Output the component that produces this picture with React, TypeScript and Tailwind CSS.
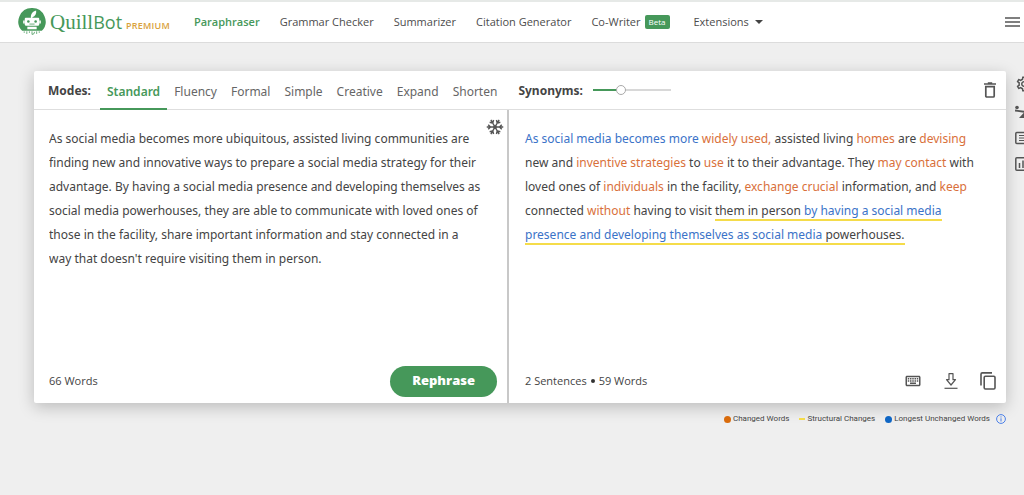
import { useState } from "react";
import type { ReactNode } from "react";
import { MdOutlineSettings, MdOutlineKeyboard } from "react-icons/md";

const SOURCE_TEXT =
  "As social media becomes more ubiquitous, assisted living communities are finding new and innovative ways to prepare a social media strategy for their advantage. By having a social media presence and developing themselves as social media powerhouses, they are able to communicate with loved ones of those in the facility, share important information and stay connected in a way that doesn't require visiting them in person.";

const MODES = ["Standard", "Fluency", "Formal", "Simple", "Creative", "Expand", "Shorten"];

function Logo() {
  return (
    <svg viewBox="0 0 54 54" className="h-7 w-7 shrink-0" aria-hidden="true">
      <path d="M27 0a26 26 0 0 1 19 44H8A26 26 0 0 1 27 0z" fill="#46985a" />
      <path d="M25 20c-1-8 3-13 10-15 1 6-2 11-7 13l-1 3z" fill="#fff" />
      <rect x="13" y="19" width="28" height="15" rx="2" fill="#fff" />
      <path d="M10 24h3v6h-3zM41 24h3v6h-3zM18 36h18v5H18z" fill="#fff" />
      <circle cx="20" cy="26" r="2.500" fill="#46985a" />
      <circle cx="34" cy="26" r="2.500" fill="#46985a" />
      <path d="M22 31h10" stroke="#46985a" strokeWidth="1.500" />
      <path d="M12 45v3m5-3v5m5-5v3m5-3v6q5 0 5-5m4-1v5m5-5v3" stroke="#46985a" strokeWidth="1.500" fill="none" />
    </svg>
  );
}

function TrashIcon() {
  return (
    <svg viewBox="0 0 12 16" className="h-4 w-3" fill="none" stroke="#555" strokeWidth="1.700" aria-hidden="true">
      <path d="M0 2h12M3.800 1h4.400" />
      <path d="M1.800 4.600h8.400v9.400q0 1-1 1H2.800q-1 0-1-1z" />
    </svg>
  );
}

function SnowflakeIcon() {
  const arms = [0, 60, 120, 180, 240, 300];
  return (
    <svg viewBox="-12 -12 24 24" className="h-[18px] w-[18px]" fill="none" stroke="#555" strokeWidth="1.900" aria-hidden="true">
      {arms.map((angle) => (
        <path key={angle} transform={`rotate(${angle + 30})`} d="M0 0V-11M-3-9L0-6L3-9" />
      ))}
      <circle r="2.500" fill="#555" stroke="none" />
    </svg>
  );
}

function DownloadIcon() {
  return (
    <svg viewBox="0 0 14 16" className="h-4 w-3.5" fill="none" stroke="#555" strokeWidth="1.200" aria-hidden="true">
      <path d="M5 .7h4v6h2.500L7 12 2.500 6.700H5z" strokeLinejoin="round" />
      <path d="M.5 15.300h13" />
    </svg>
  );
}

function CopyIcon() {
  return (
    <svg viewBox="0 0 16 18" className="h-[18px] w-4" fill="none" stroke="#555" strokeWidth="1.600" aria-hidden="true">
      <path d="M1 13.500V2.200Q1 .9 2.300.9H12" />
      <rect x="4.200" y="4.200" width="10.800" height="12.800" rx="1.200" />
    </svg>
  );
}

function BalanceIcon() {
  return (
    <svg viewBox="0 0 18 14" className="h-3.5 w-[18px]" aria-hidden="true">
      <circle cx="2" cy="2.500" r="1.800" fill="#555" />
      <path d="M0 5.500L18 8" stroke="#555" strokeWidth="1.800" />
      <path d="M9 7.500l-5 5.500h10z" fill="#555" />
    </svg>
  );
}

function NotesIcon() {
  return (
    <svg viewBox="0 0 18 14" className="h-3.5 w-[18px]" fill="none" stroke="#555" strokeWidth="1.500" aria-hidden="true">
      <rect x=".8" y="1.500" width="16.400" height="11" rx="1" />
      <path d="M4 4.500h10M4 7h10M4 9.500h7" strokeWidth="1.200" />
    </svg>
  );
}

function StatsIcon() {
  return (
    <svg viewBox="0 0 16 14" className="h-3.5 w-4" fill="none" stroke="#555" strokeWidth="1.500" aria-hidden="true">
      <rect x=".8" y=".8" width="14.400" height="12.400" rx="1" />
      <path d="M4.500 6v5M8 3.500V11M11.500 8v3" />
    </svg>
  );
}

function Changed({ children }: { children: ReactNode }) {
  return <span className="text-[#d9703a]">{children}</span>;
}

function Unchanged({ children }: { children: ReactNode }) {
  return <span className="text-[#3b73c8]">{children}</span>;
}

function Header() {
  const link = "whitespace-nowrap text-[#4c4c4c]";
  return (
    <header className="flex h-[43px] items-center border-t-2 border-b border-t-[#e6e9e7] border-b-[#dcdcdc] bg-white pr-1 pl-[18px]">
      <a href="#home" className="flex items-center gap-1 whitespace-nowrap">
        <Logo />
        <span className="font-['Liberation_Serif',serif] text-[21px] leading-7 text-[#46985a]">
          Quill<span className="font-['Open_Sans',sans-serif] text-lg leading-7">Bot</span>
        </span>
        <span className="pt-2 text-[9px] font-semibold tracking-wide text-[#d9a13c]">PREMIUM</span>
      </a>
      <nav className="ml-6 flex items-center gap-5 text-[11px] font-medium">
        <a href="#paraphraser" className="font-semibold whitespace-nowrap text-[#46985a]">Paraphraser</a>
        <a href="#grammar" className={link}>Grammar Checker</a>
        <a href="#summarizer" className={link}>Summarizer</a>
        <a href="#citation" className={link}>Citation Generator</a>
        <a href="#cowriter" className="flex items-center gap-1 whitespace-nowrap text-[#4c4c4c]">
          Co-Writer
          <span className="rounded-xs bg-[#46985a] px-1 text-[8px] leading-[14px] text-white">Beta</span>
        </a>
        <button type="button" className="ml-1 flex items-center gap-1.5 whitespace-nowrap text-[#4c4c4c]">
          Extensions
          <svg viewBox="0 0 8 4" className="h-1 w-2" aria-hidden="true">
            <path d="M0 0h8L4 4z" fill="#444" />
          </svg>
        </button>
      </nav>
      <button type="button" aria-label="Menu" className="ml-auto">
        <svg viewBox="0 0 15 10" className="h-2.5 w-[15px]" stroke="#555" strokeWidth="1.500" aria-hidden="true">
          <path d="M0 1h15M0 5h15M0 9h15" />
        </svg>
      </button>
    </header>
  );
}

export default function App() {
  const [mode, setMode] = useState("Standard");
  const [text, setText] = useState(SOURCE_TEXT);
  const [synonyms, setSynonyms] = useState(1);

  return (
    <div className="min-h-screen overflow-x-hidden bg-[#efefef] font-['Open_Sans',sans-serif] text-[#444]">
      <Header />
      <main className="flex pt-7 pl-[34px]">
        <div className="min-w-0 flex-1">
          <section className="rounded-xs bg-white font-['Noto_Sans',sans-serif] text-xs shadow-[0_4px_16px_rgba(0,0,0,0.22)]">
            <div className="flex h-[39px] items-center border-b border-[#dedede] pr-2.5 pl-3.5">
              <span className="mr-[9px] pt-0.5 font-bold">Modes:</span>
              <div role="tablist" className="flex self-stretch">
                {MODES.map((name) => (
                  <button
                    key={name}
                    type="button"
                    role="tab"
                    aria-selected={mode === name}
                    onClick={() => setMode(name)}
                    className={
                      mode === name
                        ? "-mb-px border-b-2 border-[#46985a] px-[7px] pt-1 font-semibold text-[#46985a]"
                        : "-mb-px border-b-2 border-transparent px-[7px] pt-1 text-[#666]"
                    }
                  >
                    {name}
                  </button>
                ))}
              </div>
              <label htmlFor="synonyms" className="ml-3.5 pt-0.5 font-bold">Synonyms:</label>
              <input
                id="synonyms"
                type="range"
                min={0}
                max={3}
                value={synonyms}
                onChange={(event) => setSynonyms(Number(event.target.value))}
                style={{ backgroundSize: `${(synonyms / 3) * 100}% 2px, 100% 2px` }}
                className="ml-2.5 h-2.5 w-[78px] appearance-none bg-[linear-gradient(#46985a,#46985a),linear-gradient(#d8d8d8,#d8d8d8)] bg-left bg-no-repeat [&::-webkit-slider-thumb]:h-2.5 [&::-webkit-slider-thumb]:w-2.5 [&::-webkit-slider-thumb]:appearance-none [&::-webkit-slider-thumb]:rounded-full [&::-webkit-slider-thumb]:border [&::-webkit-slider-thumb]:border-[#aaa] [&::-webkit-slider-thumb]:bg-white"
              />
              <button type="button" aria-label="Delete" className="ml-auto"><TrashIcon /></button>
            </div>

            <div className="grid min-h-[293px] grid-cols-[475fr_497fr]">
              <div className="flex flex-col border-r-2 border-[#c8c8c8]">
                <div className="flex flex-1 items-start pt-2 pr-[3px] pl-[15px]">
                  <textarea
                    aria-label="Original text"
                    value={text}
                    onChange={(event) => setText(event.target.value)}
                    className="mt-[9px] h-[200px] min-w-0 flex-1 resize-none overflow-hidden bg-transparent pr-1 leading-6 outline-none"
                  />
                  <button type="button" aria-label="Freeze words"><SnowflakeIcon /></button>
                </div>
                <div className="flex h-11 items-center justify-between pr-2.5 pl-[15px]">
                  <span className="font-['Open_Sans',sans-serif] text-[11px] font-medium">66 Words</span>
                  <button type="button" className="h-[31px] rounded-full bg-[#46985a] px-[22px] font-['Open_Sans',sans-serif] text-[13px] font-extrabold text-white">Rephrase</button>
                </div>
              </div>

              <div className="flex flex-col">
                <p className="flex-1 pt-[17px] pr-6 pl-4 leading-6">
                  <Unchanged>As social media becomes more</Unchanged> <Changed>widely used,</Changed> assisted living{" "}
                  <Changed>homes</Changed> are <Changed>devising</Changed> new and <Changed>inventive strategies</Changed> to{" "}
                  <Changed>use</Changed> it to their advantage. They <Changed>may contact</Changed> with loved ones of{" "}
                  <Changed>individuals</Changed> in the facility, <Changed>exchange crucial</Changed> information, and{" "}
                  <Changed>keep</Changed> connected <Changed>without</Changed> having to visit{" "}
                  <span className="border-b-2 border-[#f5dc4a]">
                    them in person{" "}
                    <Unchanged>by having a social media presence and developing themselves as social media</Unchanged> powerhouses.
                  </span>
                </p>
                <div className="flex h-11 items-center pr-2.5 pl-4">
                  <div className="flex items-center gap-1 font-['Open_Sans',sans-serif] text-[11px] font-medium">
                    <span>2 Sentences</span>
                    <i className="size-1 rounded-full bg-[#333]" />
                    <span>59 Words</span>
                  </div>
                  <div className="ml-auto flex items-center gap-[22px]">
                    <button type="button" aria-label="Keyboard shortcuts"><MdOutlineKeyboard className="size-[18px] text-[#555]" /></button>
                    <button type="button" aria-label="Download"><DownloadIcon /></button>
                    <button type="button" aria-label="Copy"><CopyIcon /></button>
                  </div>
                </div>
              </div>
            </div>
          </section>

          <div className="mt-2.5 flex items-center justify-end gap-2.5 font-['Roboto',sans-serif] text-[8px] leading-3">
            <span className="flex items-center gap-0.5"><i className="size-[7px] rounded-full bg-[#d96b0b]" />Changed Words</span>
            <span className="flex items-center gap-0.5"><i className="h-0.5 w-1.5 bg-[#f5dc4a]" />Structural Changes</span>
            <span className="flex items-center gap-0.5"><i className="size-[7px] rounded-full bg-[#0f66c4]" />Longest Unchanged Words</span>
            <button type="button" aria-label="About the legend" className="-ml-1">
              <svg viewBox="0 0 10 10" className="size-2.5" fill="none" stroke="#4a7fe8" aria-hidden="true">
                <circle cx="5" cy="5" r="4.400" />
                <path d="M5 4.300V7.500M5 2.400v1.100" />
              </svg>
            </button>
          </div>
        </div>

        <aside className="flex w-[18px] flex-col gap-3 overflow-hidden pt-1 pl-[9px]">
          <button type="button" aria-label="Settings" className="w-[18px]"><MdOutlineSettings className="size-[18px] text-[#555]" /></button>
          <button type="button" aria-label="Compare modes" className="w-[18px]"><BalanceIcon /></button>
          <button type="button" aria-label="Notes" className="w-[18px]"><NotesIcon /></button>
          <button type="button" aria-label="Statistics" className="w-[18px]"><StatsIcon /></button>
        </aside>
      </main>
    </div>
  );
}
